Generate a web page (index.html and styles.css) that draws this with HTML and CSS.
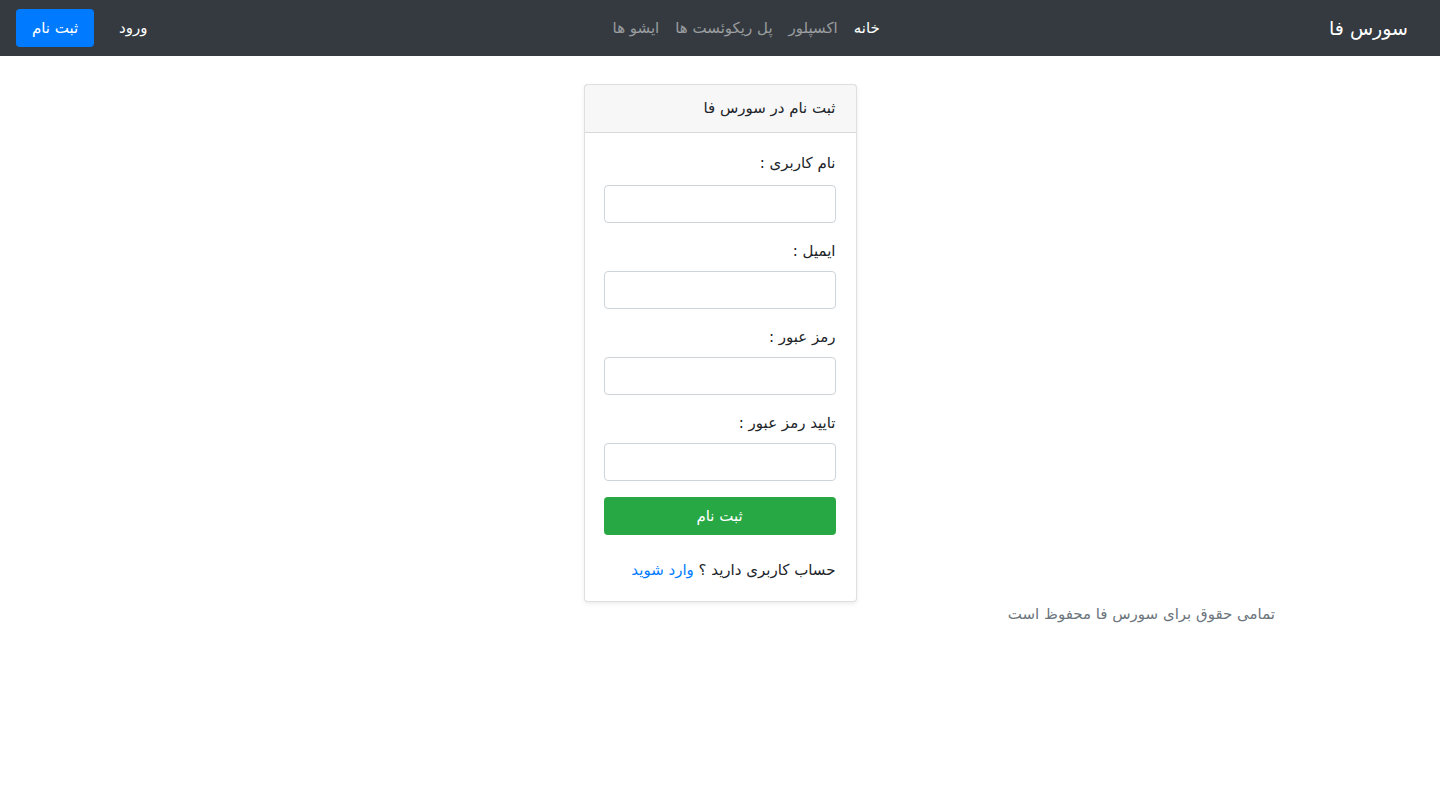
FILE: index.html
```html
<!DOCTYPE html>
<html lang="fa" dir="rtl">
<head>
<meta charset="utf-8">
<title>ثبت نام در سورس فا</title>
<link rel="stylesheet" href="styles.css">
</head>
<body>
<nav class="navbar">
  <a class="brand" href="#">سورس فا</a>
  <ul class="nav-links">
    <li><a class="active" href="#">خانه</a></li>
    <li><a href="#">اکسپلور</a></li>
    <li><a href="#">پل ریکوئست ها</a></li>
    <li><a href="#">ایشو ها</a></li>
  </ul>
  <div class="actions">
    <a class="btn-login" href="#">ورود</a>
    <a class="btn-primary" href="#">ثبت نام</a>
  </div>
</nav>
<main class="main">
  <div class="card">
    <div class="card-header">ثبت نام در سورس فا</div>
    <form class="card-body">
      <div class="group">
        <label class="label">نام کاربری :</label>
        <input class="input" type="text">
      </div>
      <div class="group">
        <label class="label">ایمیل :</label>
        <input class="input" type="email">
      </div>
      <div class="group">
        <label class="label">رمز عبور :</label>
        <input class="input" type="password">
      </div>
      <div class="group">
        <label class="label">تایید رمز عبور :</label>
        <input class="input" type="password">
      </div>
      <button class="btn-success" type="button">ثبت نام</button>
      <p class="have-account">حساب کاربری دارید ؟ <a href="#">وارد شوید</a></p>
    </form>
  </div>
  <footer class="footer">تمامی حقوق برای سورس فا محفوظ است</footer>
</main>
</body>
</html>
```
FILE: styles.css
```css
* { box-sizing: border-box; }
html, body { margin: 0; padding: 0; }
body {
  font-family: "Vazir", "DejaVu Sans", sans-serif;
  font-size: 15px;
  line-height: 24px;
  color: #212529;
  background: #fff;
}
a { text-decoration: none; }
.navbar {
  height: 56px;
  background: #343a40;
  display: flex;
  align-items: center;
  padding: 0 16px;
}
.brand {
  color: #fff;
  font-size: 19px;
  line-height: 30px;
  margin-left: 16px;
  padding: 0 16px 0 0;
}
.nav-links {
  list-style: none;
  margin: 0 auto;
  padding: 0;
  display: flex;
  position: relative;
  left: 10px;
}
.nav-links a {
  display: block;
  padding: 8px 8px;
  color: rgba(255,255,255,.5);
}
.nav-links a.active { color: #fff; }
.actions { display: flex; align-items: center; }
.btn-login {
  color: #fff;
  padding: 7px 12px;
  margin-left: 13px;
}
.btn-primary {
  display: block;
  background: #007bff;
  color: #fff;
  border-radius: 4px;
  height: 38px;
  line-height: 38px;
  padding: 0 12px;
  width: 78px;
  text-align: center;
}
.main {
  width: 1110px;
  margin: 0 auto;
  padding-top: 28px;
}
.card {
  width: 273px;
  margin: 0 auto;
  border: 1px solid rgba(0,0,0,.125);
  border-radius: 4px;
  box-shadow: 0 2px 4px rgba(0,0,0,.075);
  background: #fff;
}
.card-header {
  height: 48px;
  line-height: 46px;
  padding: 0 20px;
  background: rgba(0,0,0,.03);
  border-bottom: 1px solid rgba(0,0,0,.125);
}
.card-body { padding: 18px 20px 19px 19px; margin: 0; }
.group { margin-bottom: 16px; }
.label { display: block; margin-bottom: 8px; }
.input {
  display: block;
  width: 100%;
  height: 38px;
  border: 1px solid #ced4da;
  border-radius: 4px;
  background: #fff;
  font: inherit;
}
.group:first-child .label { margin-bottom: 10px; }
.btn-success {
  display: block;
  width: 100%;
  height: 38px;
  border: none;
  border-radius: 4px;
  background: #28a745;
  color: #fff;
  font: inherit;
}
.have-account { margin: 23px 0 0; }
.have-account a { color: #007bff; }
.footer {
  color: #6c757d;
  line-height: 24px;
}
```
